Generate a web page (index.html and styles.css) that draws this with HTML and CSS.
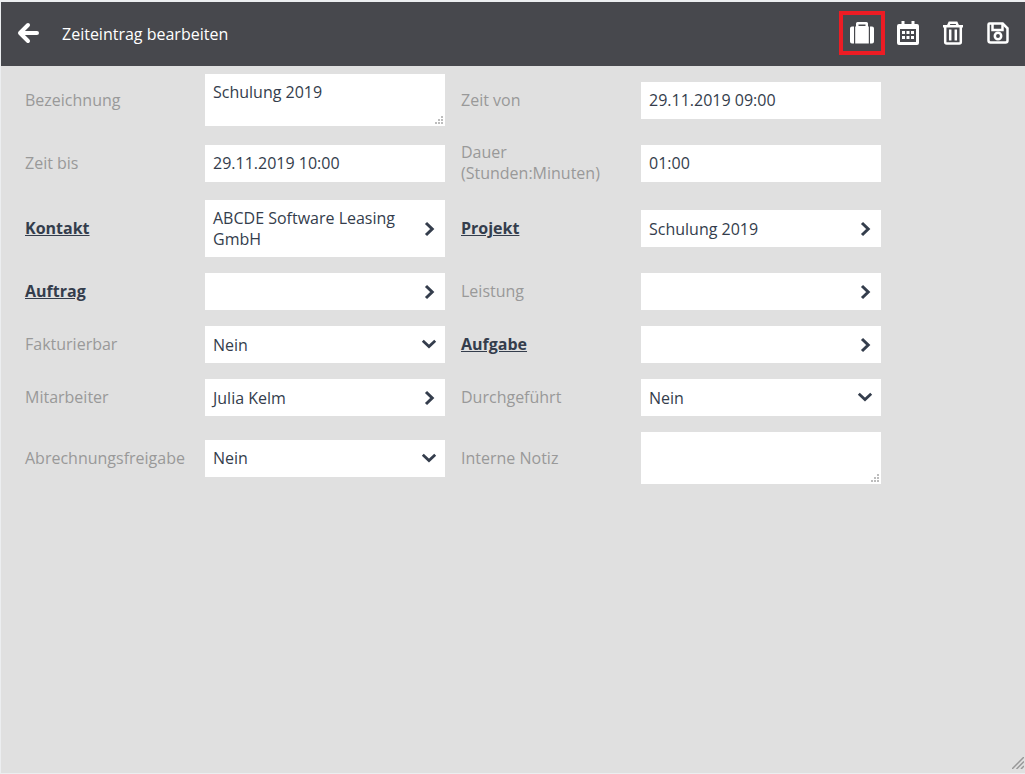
FILE: index.html
```html
<!DOCTYPE html>
<html lang="de">
<head>
<meta charset="utf-8">
<meta name="viewport" content="width=device-width, initial-scale=1">
<title>Zeiteintrag bearbeiten</title>
<link rel="stylesheet" href="styles.css">
</head>
<body>
<svg class="sprite" aria-hidden="true">
  <symbol id="chevron-right" viewBox="0 0 16 16"><path d="M5 2 11.200 8 5 14" fill="none" stroke="currentColor" stroke-width="3"/></symbol>
  <symbol id="chevron-down" viewBox="0 0 16 16"><path d="M1.800 4.800 8 10.500 14.200 4.800" fill="none" stroke="currentColor" stroke-width="2.800"/></symbol>
  <symbol id="grip" viewBox="0 0 8 8"><path d="M6 0h2v2H6zM3 3h2v2H3zM6 3h2v2H6zM0 6h2v2H0zM3 6h2v2H3zM6 6h2v2H6z" fill="#bdbdbd"/></symbol>
</svg>
<div class="window">
  <header class="bar">
    <button class="tool back" aria-label="Zurück">
      <svg class="icon" viewBox="0 0 24 24"><path d="M4 12h17M12 4 4 12l8 8" fill="none" stroke="currentColor" stroke-width="4" stroke-linecap="round" stroke-linejoin="round"/></svg>
    </button>
    <h1 class="title">Zeiteintrag bearbeiten</h1>
    <div class="tools">
      <button class="tool marked" aria-label="Koffer">
        <svg class="icon wide" viewBox="0 0 26 24"><path d="M5 5.500v17H3a2 2 0 0 1-2-2v-13a2 2 0 0 1 2-2zM21 5.500v17h2a2 2 0 0 0 2-2v-13a2 2 0 0 0-2-2zM6.200 22.500V5.500H7V2.500a1.500 1.500 0 0 1 1.500-1.500h9A1.500 1.500 0 0 1 19 2.500v3h.800v17zM9.500 3.500v1.500h7V3.500z" fill="currentColor" fill-rule="evenodd"/></svg>
      </button>
      <button class="tool" aria-label="Kalender">
        <svg class="icon" viewBox="0 0 24 24"><path d="M5.500 0h3v3h7V0h3v3H21a2 2 0 0 1 2 2v17a2 2 0 0 1-2 2H3a2 2 0 0 1-2-2V5a2 2 0 0 1 2-2h2.500zM4 8v13h16V8z" fill="currentColor" fill-rule="evenodd"/><path d="M6 10h3v3H6zM10.500 10h3v3h-3zM15 10h3v3h-3zM6 15h3v3H6zM10.500 15h3v3h-3zM15 15h3v3h-3z" fill="currentColor"/></svg>
      </button>
      <button class="tool" aria-label="Löschen">
        <svg class="icon" viewBox="0 0 24 24"><path d="M2 5.200h20M7 5l1.500-3.200h7L17 5M4.200 5v16a1.500 1.500 0 0 0 1.500 1.500h12.600a1.500 1.500 0 0 0 1.500-1.500V5" fill="none" stroke="currentColor" stroke-width="2.500"/><path d="M9.200 8.500v11M14.800 8.500v11" stroke="currentColor" stroke-width="2.500"/></svg>
      </button>
      <button class="tool" aria-label="Speichern">
        <svg class="icon" viewBox="0 0 24 24"><path d="M3.500 2.500h13.200l4.800 4.800v12.200a2 2 0 0 1-2 2h-15a2 2 0 0 1-2-2V3.500a1 1 0 0 1 1-1z" fill="none" stroke="currentColor" stroke-width="2.500"/><path d="M6.500 3v6h10V3" fill="none" stroke="currentColor" stroke-width="2.500"/><circle cx="12" cy="15" r="3.200" fill="none" stroke="currentColor" stroke-width="2.500"/></svg>
      </button>
    </div>
  </header>
  <form class="form">
    <label class="label" for="bezeichnung">Bezeichnung</label>
    <div class="field"><textarea class="control area" id="bezeichnung">Schulung 2019</textarea><svg class="grip"><use href="#grip"/></svg></div>
    <label class="label" for="von">Zeit von</label>
    <input class="control" id="von" type="text" value="29.11.2019 09:00">

    <label class="label" for="bis">Zeit bis</label>
    <input class="control" id="bis" type="text" value="29.11.2019 10:00">
    <label class="label" for="dauer">Dauer (Stunden:Minuten)</label>
    <input class="control" id="dauer" type="text" value="01:00">

    <a class="label link" id="kontakt" href="#kontakt">Kontakt</a>
    <button class="control lookup" type="button" aria-labelledby="kontakt"><span class="value">ABCDE Software Leasing GmbH</span><svg class="chevron"><use href="#chevron-right"/></svg></button>
    <a class="label link" id="projekt" href="#projekt">Projekt</a>
    <button class="control lookup" type="button" aria-labelledby="projekt"><span class="value">Schulung 2019</span><svg class="chevron"><use href="#chevron-right"/></svg></button>

    <a class="label link" id="auftrag" href="#auftrag">Auftrag</a>
    <button class="control lookup" type="button" aria-labelledby="auftrag"><span class="value"></span><svg class="chevron"><use href="#chevron-right"/></svg></button>
    <label class="label" for="leistung">Leistung</label>
    <button class="control lookup" type="button" id="leistung"><span class="value"></span><svg class="chevron"><use href="#chevron-right"/></svg></button>

    <label class="label" for="fakturierbar">Fakturierbar</label>
    <div class="field"><select class="control" id="fakturierbar"><option>Nein</option><option>Ja</option></select><svg class="chevron over"><use href="#chevron-down"/></svg></div>
    <a class="label link" id="aufgabe" href="#aufgabe">Aufgabe</a>
    <button class="control lookup" type="button" aria-labelledby="aufgabe"><span class="value"></span><svg class="chevron"><use href="#chevron-right"/></svg></button>

    <label class="label" for="mitarbeiter">Mitarbeiter</label>
    <button class="control lookup" type="button" id="mitarbeiter"><span class="value">Julia Kelm</span><svg class="chevron"><use href="#chevron-right"/></svg></button>
    <label class="label" for="durchgefuehrt">Durchgeführt</label>
    <div class="field"><select class="control" id="durchgefuehrt"><option>Nein</option><option>Ja</option></select><svg class="chevron over"><use href="#chevron-down"/></svg></div>

    <label class="label" for="freigabe">Abrechnungsfreigabe</label>
    <div class="field"><select class="control" id="freigabe"><option>Nein</option><option>Ja</option></select><svg class="chevron over"><use href="#chevron-down"/></svg></div>
    <label class="label" for="notiz">Interne Notiz</label>
    <div class="field"><textarea class="control area" id="notiz"></textarea><svg class="grip"><use href="#grip"/></svg></div>
  </form>
  <svg class="corner" viewBox="0 0 12 12" aria-hidden="true"><path d="M0 12 12 0M4.500 12 12 4.500M9 12l3-3" stroke="#999" stroke-width="1.500"/></svg>
</div>
</body>
</html>
```
FILE: styles.css
```css
* {
  box-sizing: border-box;
}

body {
  margin: 0;
  background: #f0f1f3;
  color: #343d4c;
  font: 16px/21px "Open Sans", "Noto Sans", sans-serif;
}

.sprite {
  position: absolute;
  width: 0;
  height: 0;
}

.window {
  position: relative;
  min-height: 100vh;
  border: solid #eceef0;
  border-width: 2px 0 1px 1px;
  background: #e0e0e0;
}

.bar {
  display: flex;
  align-items: center;
  height: 64px;
  padding: 0 5px 2px 4px;
  background: #47484d;
  color: #fff;
}

.title {
  flex: 1;
  margin: 0 0 0 12px;
  padding-top: 2px;
  font-size: 16px;
  font-weight: 400;
}

.back {
  padding-top: 2px;
}

.tools {
  display: flex;
}

.tool {
  display: flex;
  align-items: center;
  justify-content: center;
  width: 45px;
  height: 44px;
  padding: 0;
  border: 0;
  background: none;
  color: inherit;
}

.tools .marked {
  width: 46px;
  border: 4px solid #ed1c24;
}

.icon {
  width: 24px;
  height: 24px;
}

.wide {
  width: 26px;
}

.form {
  display: grid;
  grid-template-columns: 180px 240px 196px 240px;
  row-gap: 16px;
  align-items: center;
  padding: 8px 24px;
}

.label {
  color: #999;
}

.control + .label,
.field + .label {
  padding-left: 16px;
}

.form > :nth-child(4n + 1) {
  padding-left: 0;
}

.link {
  color: #343d4c;
  font-weight: 700;
}

.field {
  position: relative;
  display: flex;
}

.control {
  width: 100%;
  min-height: 37px;
  margin: 0;
  padding: 8px 8px 7px;
  border: 0;
  border-radius: 0;
  background: #fff;
  color: inherit;
  font: inherit;
  text-align: left;
  appearance: none;
}

.area {
  height: 52px;
  resize: none;
}

.lookup {
  display: flex;
  align-items: center;
}

.value {
  flex: 1;
}

.chevron {
  width: 16px;
  height: 16px;
  flex: none;
}

.over {
  position: absolute;
  top: 10px;
  right: 8px;
  pointer-events: none;
}

.grip {
  position: absolute;
  right: 2px;
  bottom: 2px;
  width: 8px;
  height: 8px;
  pointer-events: none;
}

.corner {
  position: absolute;
  right: 1px;
  bottom: 4px;
  width: 12px;
  height: 12px;
}
```
